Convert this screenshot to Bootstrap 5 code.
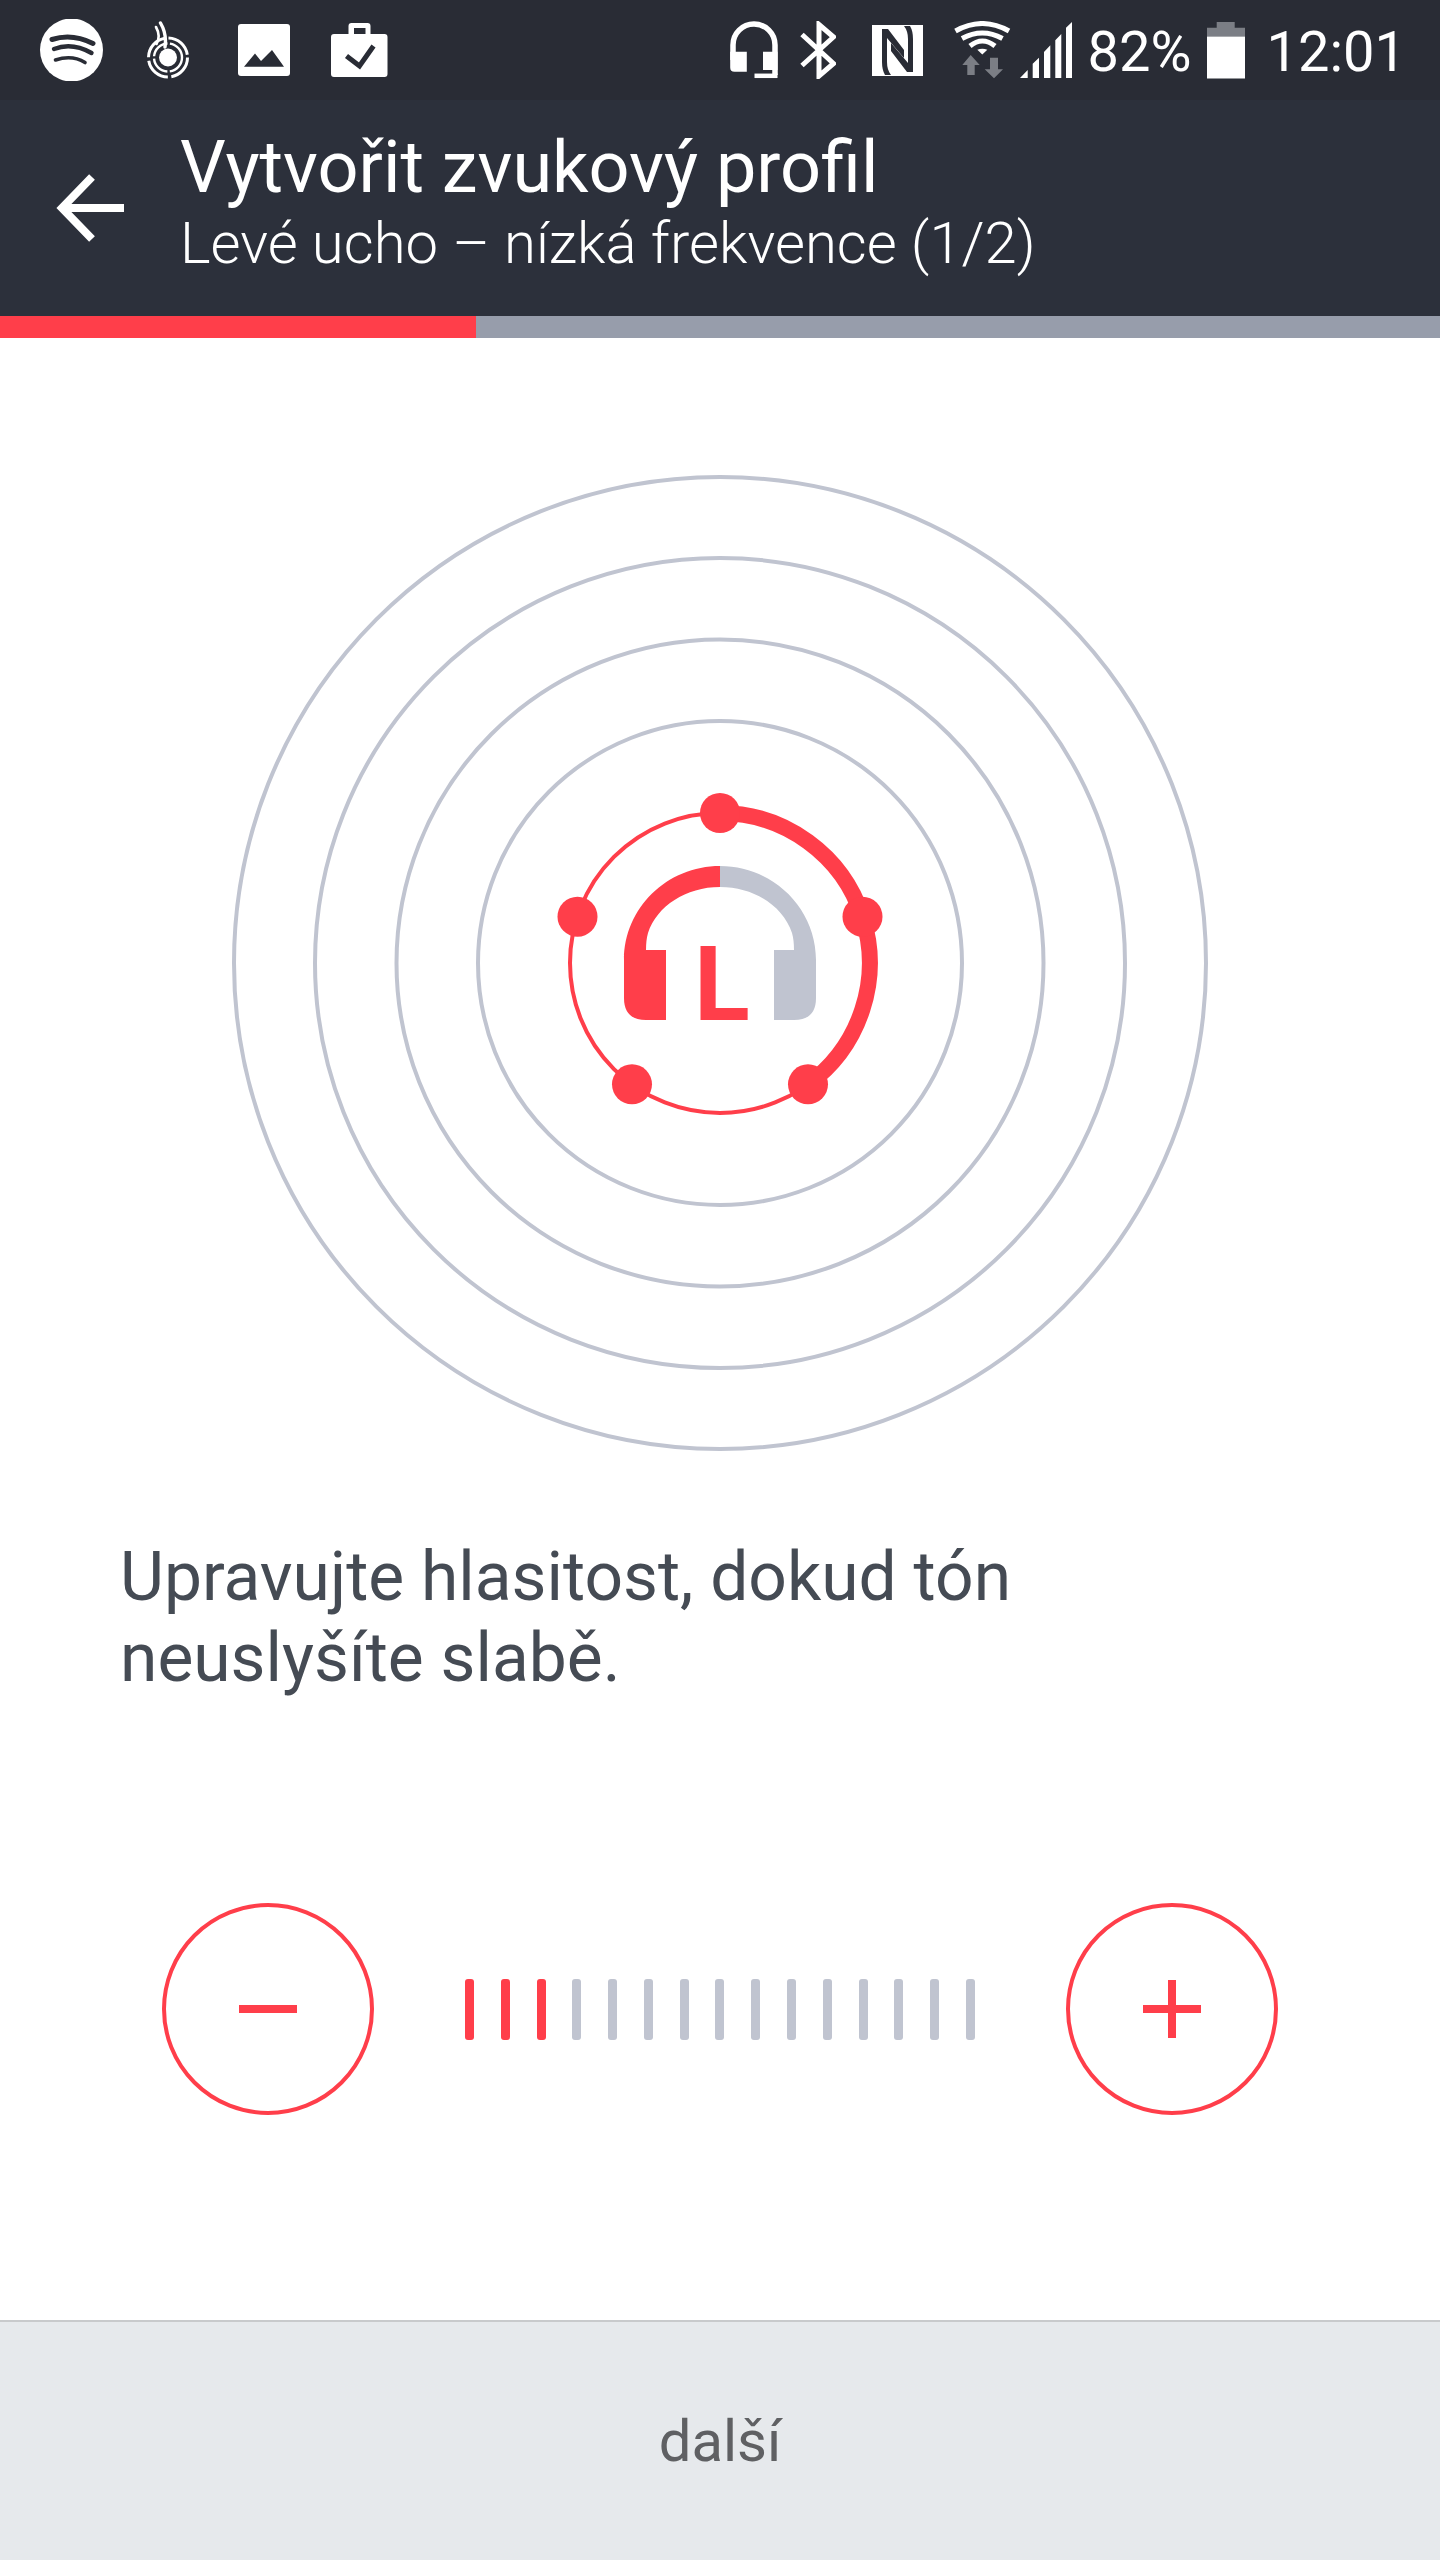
<!DOCTYPE html>
<html lang="cs">
<head>
    <meta charset="UTF-8">
    <meta name="viewport" content="width=device-width, initial-scale=1.0">
    <title>Vytvořit zvukový profil</title>
    <link href="https://cdn.jsdelivr.net/npm/bootstrap@5.3.0/dist/css/bootstrap.min.css" rel="stylesheet">
    <style>
        body {
            background: #fff;
            font-family: Roboto, "Liberation Sans", sans-serif;
        }
        svg { display: block; flex: none; }
        .screen { height: 2560px; }
        .status-bar {
            height: 100px;
            background: #292c35;
            padding: 0 34px 0 40px;
            color: #fff;
            font-size: 56px;
            line-height: 1;
        }
        .status-text { padding-top: 3px; }
        .status-pct { margin-left: 16px; margin-right: 15px; }
        .status-clock { margin-left: 22px; }
        .gap-a { margin-left: 44px; }
        .gap-b { margin-left: 49px; }
        .gap-c { margin-left: 41px; }
        .gap-d { margin-left: 22px; }
        .gap-e { margin-left: 36px; }
        .gap-f { margin-left: 31px; }
        .gap-g { margin-left: 9px; }
        .app-bar {
            height: 216px;
            background: #2c303b;
            color: #fff;
            padding-left: 56px;
        }
        .title-block { margin-left: 56px; margin-top: 28px; }
        .title-main { font-size: 72px; line-height: 80px; }
        .title-sub { font-size: 58px; line-height: 66px; font-weight: 300; margin-top: 2px; }
        .progress-track { height: 22px; background: #979dab; }
        .progress-fill { width: 476px; background: #ff3e4a; }
        .diagram { margin-top: 132px; }
        .hint {
            color: #454b54;
            font-size: 67.7px;
            line-height: 81px;
            padding-left: 120px;
            margin-top: 79px;
        }
        .controls { padding: 0 162px; margin-top: 204px; }
        .round-btn {
            width: 212px;
            height: 212px;
            border: 4px solid #ff3e4a;
            border-radius: 50%;
            background: #fff;
            padding: 0;
        }
        .ticks { width: 510px; }
        .tick { width: 9px; height: 61px; border-radius: 3px; background: #c0c4d0; }
        .tick-on { background: #ff3e4a; }
        .next-bar {
            height: 240px;
            background: #e6e9ec;
            border-top: 2px solid #c8cacc;
            color: #5f6063;
            font-size: 58px;
        }
    </style>
</head>
<body>
    <div class="screen d-flex flex-column">

        <div class="status-bar d-flex align-items-center">
            <!-- spotify -->
            <svg width="63" height="62" viewBox="40 19 63 62">
                <circle cx="71.5" cy="50" r="31.5" fill="#fff"/>
                <g fill="none" stroke="#292c35" stroke-linecap="round">
                    <path d="M52 39.5Q72 33 93 43.5" stroke-width="5"/>
                    <path d="M54 49Q72 42 91.5 53" stroke-width="4.4"/>
                    <path d="M55.5 60Q72 54.5 85 62.5" stroke-width="3.6"/>
                </g>
            </svg>
            <!-- boost -->
            <svg class="gap-a" width="42" height="58" viewBox="147 22 42 58">
                <circle cx="168" cy="58.5" r="9" fill="#fff"/>
                <g fill="none" stroke="#fff">
                    <circle cx="168" cy="58.5" r="14" stroke-width="2.4" stroke-dasharray="20 2.5"/>
                    <circle cx="168" cy="58.5" r="19.5" stroke-width="3" stroke-dasharray="27 3.6"/>
                    <path d="M160.5 24Q167 35 165 48" stroke-width="3.4" stroke-linecap="round"/>
                    <path d="M156 28Q161 37 156.500 45" stroke-width="2.6" stroke-linecap="round"/>
                </g>
            </svg>
            <!-- image -->
            <svg class="gap-b" width="52" height="52" viewBox="238 24 52 52">
                <rect x="238" y="24" width="52" height="52" rx="3" fill="#fff"/>
                <path d="M244 66.700 255 53.500 261 61 272 50 284 66.700Z" fill="#292c35"/>
            </svg>
            <!-- task -->
            <svg class="gap-c" width="57" height="54" viewBox="331.500 22 57 54">
                <path fill="#fff" fill-rule="evenodd" d="M349 33V25q0-3 3-3h16q3 0 3 3v8h14q3 0 3 3v37q0 3-3 3h-50.500q-3 0-3-3V36q0-3 3-3Zm5.500 0H366V27H354.500Z"/>
                <path d="M347 55 360 65 374 45" fill="none" stroke="#292c35" stroke-width="5"/>
            </svg>

            <div class="ms-auto"></div>

            <!-- headset -->
            <svg width="48" height="58" viewBox="731.500 21 48 58">
                <path d="M734.500 60V45a21 21 0 0 1 42 0V75" fill="none" stroke="#fff" stroke-width="5.500"/>
                <path d="M731.700 51.700H748.300V71.700H736q-4.300 0-4.300-4.300ZM764.500 51.700H779V70H764.500Z" fill="#fff"/>
                <path d="M756 75.800H779" stroke="#fff" stroke-width="4.500"/>
            </svg>
            <!-- bluetooth -->
            <svg class="gap-d" width="36" height="58" viewBox="801.500 21.500 36 58">
                <path d="M803.500 35 835 64 820.500 76.500V25L835 37.500 803.500 66" fill="none" stroke="#fff" stroke-width="5"/>
            </svg>
            <!-- nfc -->
            <svg class="gap-e" width="51" height="51" viewBox="873 25 51 51">
                <rect x="873" y="25" width="51" height="51" fill="#fff"/>
                <path fill="#292c35" d="M883 29H889L905 50V58L888 38V62Q888 70 892 75H886Q883 70 883 62Z"/>
                <path fill="#292c35" d="M914 72H908L892 51V43L909 63V39Q909 31 905 26H911Q914 31 914 39Z"/>
            </svg>
            <!-- wifi -->
            <svg class="gap-f" width="57" height="58" viewBox="955 21 57 58">
                <g fill="none" stroke="#fff" stroke-width="5">
                    <path d="M956.500 31Q983.300 16 1010 31"/>
                    <path d="M963 38.500Q983.300 27.500 1003.500 38.500"/>
                    <path d="M971 46Q983.300 36 996 46"/>
                </g>
                <path d="M978.300 49.800Q983.300 47.500 988.300 49.800L983.300 54.500Z" fill="#fff"/>
                <path d="M971.700 55 980.700 65H975.700V75H968.300V65H963.300ZM995 78.300 1004 69.300H999V57.700H991V69.300H985.700Z" fill="#7b7e85"/>
            </svg>
            <!-- signal -->
            <svg class="gap-g" width="52" height="57" viewBox="1020 20 52 57">
                <path fill="#fff" d="M1020 76 1027.700 68V76ZM1032.700 61.700 1039 55.700V76H1032.700ZM1044 50 1050.300 43.300V76H1044ZM1055.300 38.300 1061.300 32V76H1055.300ZM1066 25.700 1072 20V76H1066Z"/>
            </svg>
            <span class="status-text status-pct">82%</span>
            <!-- battery -->
            <svg width="38" height="57" viewBox="1207 21.500 38 57">
                <path d="M1216.700 21.500H1234.700V27.300H1245V36H1207V27.300H1216.700Z" fill="#7b7e85"/>
                <rect x="1207" y="36" width="38" height="42" fill="#fff"/>
            </svg>
            <span class="status-text status-clock">12:01</span>
        </div>

        <div class="app-bar d-flex align-items-center">
            <svg width="68" height="70" viewBox="56 173 68 70">
                <path d="M124 208H62M92 177 62 208 92 239" fill="none" stroke="#fff" stroke-width="8"/>
            </svg>
            <div class="title-block align-self-start">
                <div class="title-main">Vytvořit zvukový profil</div>
                <div class="title-sub">Levé ucho – nízká frekvence (1/2)</div>
            </div>
        </div>

        <div class="progress-track d-flex">
            <div class="progress-fill"></div>
        </div>

        <svg class="diagram mx-auto" width="988" height="988" viewBox="226 470 988 988">
            <g fill="none" stroke="#c0c4d0" stroke-width="4">
                <circle cx="720" cy="963" r="486"/>
                <circle cx="720" cy="963" r="405"/>
                <circle cx="720" cy="963" r="323.500"/>
                <circle cx="720" cy="963" r="242"/>
            </g>
            <g fill="none" stroke="#ff3e4a">
                <circle cx="720" cy="963" r="150" stroke-width="4"/>
                <path d="M720 813A150 150 0 0 1 808 1084.300" stroke-width="16"/>
            </g>
            <g fill="#ff3e4a">
                <circle cx="720" cy="813" r="20"/>
                <circle cx="577.500" cy="916.700" r="20"/>
                <circle cx="862.500" cy="916.700" r="20"/>
                <circle cx="632" cy="1084.300" r="20"/>
                <circle cx="808" cy="1084.300" r="20"/>
                <path d="M720 866C667 866 624 908 624 960V998Q624 1020 646 1020H666V950H646Q646 940 648 933C657 906 686 887 720 887Z"/>
            </g>
            <path fill="#c0c4d0" d="M720 866C773 866 816 908 816 960V998Q816 1020 794 1020H774V950H794Q794 940 792 933C783 906 754 887 720 887Z"/>
            <text x="694" y="1020" font-family="Roboto, sans-serif" font-weight="700" font-size="103" fill="#ff3e4a">L</text>
        </svg>

        <p class="hint mb-0">Upravujte hlasitost, dokud tón<br>neuslyšíte slabě.</p>

        <div class="controls d-flex align-items-center justify-content-between">
            <button class="round-btn d-flex align-items-center justify-content-center" type="button" aria-label="minus">
                <svg width="58" height="8" viewBox="0 0 58 8"><rect width="58" height="8" fill="#ff3e4a"/></svg>
            </button>
            <div class="ticks d-flex justify-content-between">
                <div class="tick tick-on"></div>
                <div class="tick tick-on"></div>
                <div class="tick tick-on"></div>
                <div class="tick"></div>
                <div class="tick"></div>
                <div class="tick"></div>
                <div class="tick"></div>
                <div class="tick"></div>
                <div class="tick"></div>
                <div class="tick"></div>
                <div class="tick"></div>
                <div class="tick"></div>
                <div class="tick"></div>
                <div class="tick"></div>
                <div class="tick"></div>
            </div>
            <button class="round-btn d-flex align-items-center justify-content-center" type="button" aria-label="plus">
                <svg width="58" height="58" viewBox="0 0 58 58"><path d="M25 0h8v25h25v8H33v25h-8V33H0v-8h25Z" fill="#ff3e4a"/></svg>
            </button>
        </div>

        <div class="next-bar mt-auto d-flex align-items-center justify-content-center">další</div>
    </div>

    <script src="https://cdn.jsdelivr.net/npm/bootstrap@5.3.0/dist/js/bootstrap.bundle.min.js"></script>
</body>
</html>
